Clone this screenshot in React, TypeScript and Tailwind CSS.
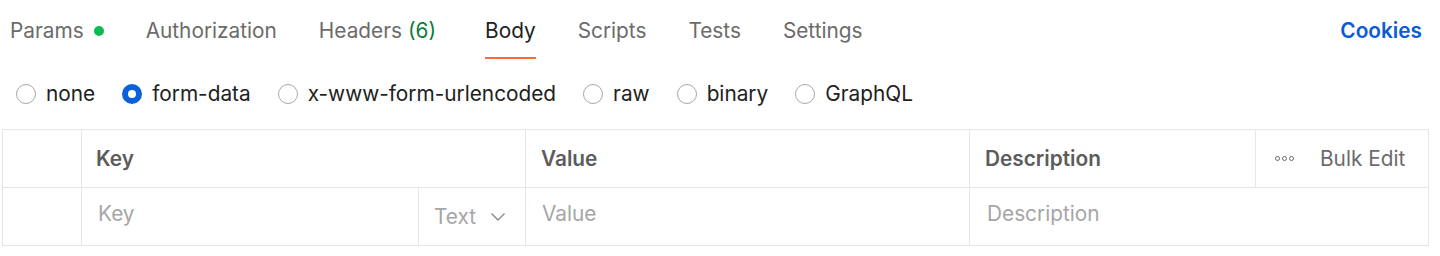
import React from "react";

const tabs = [
  { label: "Params", dot: true },
  { label: "Authorization" },
  { label: "Headers", count: "(6)" },
  { label: "Body", active: true },
  { label: "Scripts" },
  { label: "Tests" },
  { label: "Settings" },
];

const radios = [
  { label: "none" },
  { label: "form-data", checked: true },
  { label: "x-www-form-urlencoded" },
  { label: "raw" },
  { label: "binary" },
  { label: "GraphQL" },
];

function Radio({ checked }: { checked?: boolean }) {
  return checked ? (
    <span className="w-[20px] h-[20px] rounded-full border-[6px] border-[#0b62d6] bg-white shrink-0" />
  ) : (
    <span className="w-[20px] h-[20px] rounded-full border-[1.5px] border-[#a8a8a8] bg-white shrink-0" />
  );
}

export default function App() {
  return (
    <div className="w-[1440px] h-[256px] bg-white font-['Inter',sans-serif] text-[20.8px] overflow-hidden">
      <div className="flex items-stretch h-[64px] pl-[10px] pr-[18px]">
        <div className="flex items-stretch gap-[42px]">
          {tabs.map((t) => (
            <div
              key={t.label}
              className={"relative flex items-center pb-[2px]" + (t.active ? " ml-[7px]" : "")}
            >
              <span className={t.active ? "text-[#212121]" : "text-[#6b6b6b]"}>{t.label}</span>
              {t.count && <span className="ml-[6px] text-[#0a7d3b]">{t.count}</span>}
              {t.dot && <span className="ml-[10px] w-[10px] h-[10px] rounded-full bg-[#0cbb52]" />}
              {t.active && (
                <span className="absolute left-0 right-0 bottom-[5px] h-[2px] bg-[#ff6c37]" />
              )}
            </div>
          ))}
        </div>
        <div className="ml-auto flex items-center pb-[2px]">
          <span className="text-[#0b5cd5] font-semibold">Cookies</span>
        </div>
      </div>
      <div className="flex items-center h-[60px] pl-[16px] gap-[27px]">
        {radios.map((r) => (
          <div key={r.label} className="flex items-center gap-[10px] text-[#212121]">
            <Radio checked={r.checked} />
            <span>{r.label}</span>
          </div>
        ))}
      </div>
      <div className="mt-[5px] mx-[2px] w-[1427px] border border-[#e6e6e6]">
        <div className="grid grid-cols-[78px_444px_444px_286px_1fr] h-[58px] border-b border-[#e6e6e6]">
          <div />
          <div className="border-l border-[#e6e6e6] flex items-center pl-[14px] font-semibold text-[#5c5c5c]">Key</div>
          <div className="border-l border-[#e6e6e6] flex items-center pl-[15px] font-semibold text-[#5c5c5c]">Value</div>
          <div className="border-l border-[#e6e6e6] flex items-center pl-[15px] font-semibold text-[#5c5c5c]">Description</div>
          <div className="border-l border-[#e6e6e6] flex items-center pl-[19px] text-[#6b6b6b]">
            <span className="flex gap-[2px] items-center">
              {[0, 1, 2].map((i) => (
                <span key={i} className="w-[5px] h-[5px] rounded-full border border-[#6b6b6b]" />
              ))}
            </span>
            <span className="ml-[26px]">Bulk Edit</span>
          </div>
        </div>
        <div className="grid grid-cols-[78px_337px_107px_444px_1fr] h-[57px] text-[#a6a6a6]">
          <div />
          <div className="border-l border-[#e6e6e6] flex items-center pl-[16px] pb-[5px]">Key</div>
          <div className="border-l border-[#e6e6e6] flex items-center pl-[15px]">
            <span>Text</span>
            <svg className="ml-[14px]" width="16" height="10" viewBox="0 0 16 10" fill="none">
              <path d="M1.5 1.5 L8 8 L14.5 1.5" stroke="#8a8a8a" strokeWidth="1.4" />
            </svg>
          </div>
          <div className="border-l border-[#e6e6e6] flex items-center pl-[16px] pb-[5px]">Value</div>
          <div className="border-l border-[#e6e6e6] flex items-center pl-[17px] pb-[5px]">Description</div>
        </div>
      </div>
    </div>
  );
}
